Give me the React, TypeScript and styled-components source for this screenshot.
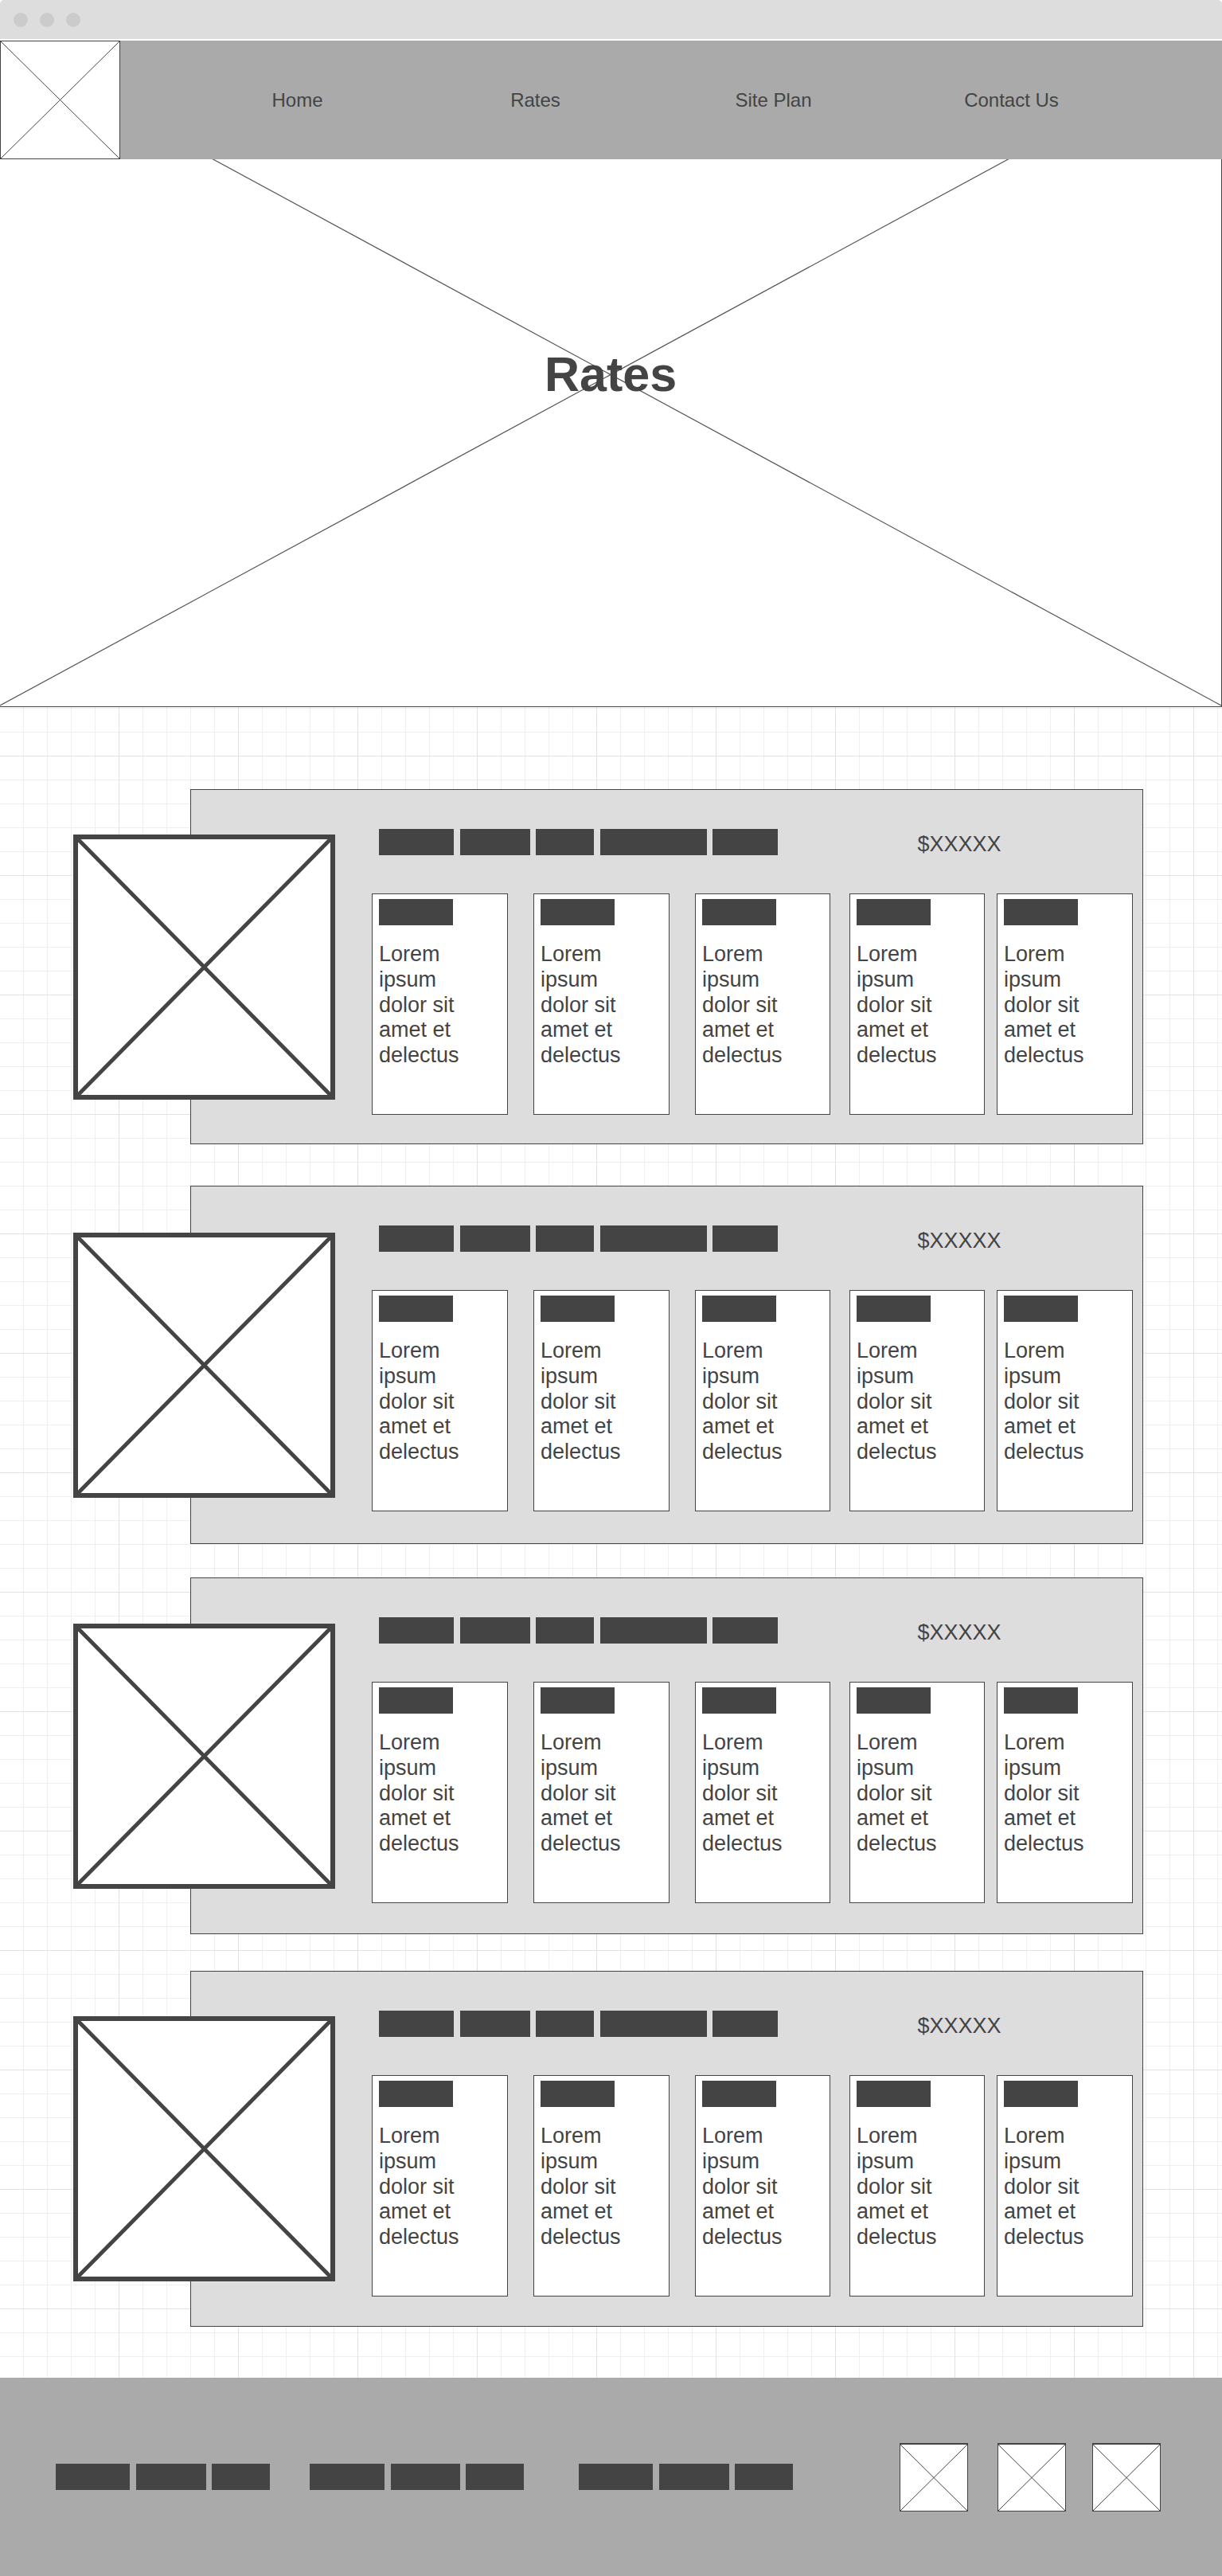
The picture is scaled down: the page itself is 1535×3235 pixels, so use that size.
import React from 'react';
import styled, { createGlobalStyle } from 'styled-components';

const INK = '#444444';

const GlobalStyle = createGlobalStyle`
  html, body {
    margin: 0;
    padding: 0;
    background: #ffffff;
  }
  body {
    font-family: "Liberation Sans", Arial, sans-serif;
    color: ${INK};
  }
  * {
    box-sizing: border-box;
  }
`;

const Page = styled.div`
  width: 1535px;
`;

/* browser chrome */
const ChromeBar = styled.div`
  display: flex;
  align-items: center;
  gap: 15px;
  height: 49px;
  margin-bottom: 2px;
  padding-left: 17px;
  background: #dddddd;
  border-radius: 5px 5px 0 0;
`;

const Dot = styled.span`
  width: 18px;
  height: 18px;
  border-radius: 50%;
  background: #cbcbcb;
`;

/* header */
const Header = styled.header`
  display: flex;
  height: 149px;
  background: #aaaaaa;
`;

const Logo = styled.div`
  flex-shrink: 0;
  width: 151px;
  height: 149px;
  background: #ffffff;
  border: 1px solid ${INK};
`;

const Nav = styled.nav`
  display: grid;
  grid-template-columns: repeat(4, 299px);
  align-items: center;
  margin-left: 73px;
`;

const NavLink = styled.a`
  text-align: center;
  font-size: 24px;
  color: ${INK};
  text-decoration: none;
`;

const CrossSvg = styled.svg`
  display: block;
  width: 100%;
  height: 100%;
`;

const Cross = ({ weight = 1 }: { weight?: number }) => (
  <CrossSvg viewBox="0 0 100 100" preserveAspectRatio="none">
    <line x1="0" y1="0" x2="100" y2="100" stroke={INK} strokeWidth={weight} vectorEffect="non-scaling-stroke" />
    <line x1="100" y1="0" x2="0" y2="100" stroke={INK} strokeWidth={weight} vectorEffect="non-scaling-stroke" />
  </CrossSvg>
);

/* hero */
const Hero = styled.section`
  position: relative;
  height: 688px;
  background: #ffffff;
  border-right: 1px solid ${INK};
  border-bottom: 1px solid ${INK};
  overflow: hidden;
`;

const HeroLines = styled.svg`
  position: absolute;
  inset: 0;
  width: 100%;
  height: 100%;
`;

const HeroTitle = styled.h1`
  position: relative;
  margin: 0;
  padding-top: 240px;
  text-align: center;
  font-size: 61px;
  line-height: 61px;
  font-weight: 700;
  color: ${INK};
`;

/* rates list */
const RatesArea = styled.section`
  display: flow-root;
  padding: 103px 0 64px;
  background-color: #ffffff;
  background-image:
    linear-gradient(to right, #e2e2e2 1px, transparent 1px),
    linear-gradient(to bottom, #e2e2e2 1px, transparent 1px),
    linear-gradient(to right, #efefef 1px, transparent 1px),
    linear-gradient(to bottom, #efefef 1px, transparent 1px);
  background-size: 150px 150px, 150px 150px, 30px 30px, 30px 30px;
  background-position: 149px 0, 0 61px, 29px 0, 0 1px;
`;

const Row = styled.div<{ $top: number }>`
  display: flex;
  align-items: center;
  padding-left: 92px;
  margin-top: ${p => p.$top}px;
`;

const Thumb = styled.div`
  position: relative;
  z-index: 1;
  flex-shrink: 0;
  width: 329px;
  height: 333px;
  background: #ffffff;
  border: 6px solid ${INK};
`;

const Panel = styled.div<{ $height: number }>`
  flex-shrink: 0;
  width: 1197px;
  height: ${p => p.$height}px;
  margin-left: -182px;
  padding: 49px 0 0 227px;
  background: #dddddd;
  border: 1px solid ${INK};
`;

const TopRow = styled.div`
  display: flex;
  align-items: flex-start;
  gap: 7.5px;
  height: 33px;
  padding-left: 9px;
`;

const Block = styled.span<{ $w: number }>`
  display: block;
  flex-shrink: 0;
  width: ${p => p.$w}px;
  height: 33px;
  background: ${INK};
`;

const Price = styled.span`
  margin-left: 168px;
  padding-top: 3px;
  font-size: 27px;
  line-height: 33px;
  color: ${INK};
`;

const Cards = styled.div`
  display: flex;
  margin-top: 48px;
`;

const Card = styled.div<{ $offset: number; $w: number }>`
  flex-shrink: 0;
  width: ${p => p.$w}px;
  height: 278px;
  margin-left: ${p => p.$offset}px;
  padding: 6px 0 0 8px;
  background: #ffffff;
  border: 1px solid ${INK};
`;

const CardText = styled.p`
  margin: 21px 0 0;
  font-size: 27px;
  line-height: 31.75px;
  color: ${INK};
`;

/* footer */
const Footer = styled.footer`
  display: flex;
  align-items: center;
  height: 249px;
  padding-left: 70px;
  background: #aaaaaa;
`;

const FooterGroup = styled.div<{ $offset: number }>`
  display: flex;
  gap: 7.5px;
  margin-left: ${p => p.$offset}px;
`;

const SocialIcon = styled.div<{ $offset: number }>`
  flex-shrink: 0;
  width: 86px;
  height: 86px;
  margin-left: ${p => p.$offset}px;
  background: #ffffff;
  border: 1px solid ${INK};
  border-top-width: 2px;
`;

const navItems = ['Home', 'Rates', 'Site Plan', 'Contact Us'];
const topBlocks = [94, 88, 73, 134, 82];
const cardLayout = [
  { offset: 0, w: 171 },
  { offset: 32, w: 171 },
  { offset: 32, w: 170 },
  { offset: 24, w: 170 },
  { offset: 15, w: 171 },
];
const rows = [
  { top: 0, height: 446 },
  { top: 52, height: 450 },
  { top: 42, height: 448 },
  { top: 46, height: 447 },
];
const footerGroups = [
  { offset: 0, bars: [93, 88, 73] },
  { offset: 50, bars: [94, 87, 73] },
  { offset: 69, bars: [93, 88, 73] },
];
const socialOffsets = [134, 37, 33];

const RateRow = ({ top, height }: { top: number; height: number }) => (
  <Row $top={top}>
    <Thumb>
      <Cross weight={5} />
    </Thumb>
    <Panel $height={height}>
      <TopRow>
        {topBlocks.map((w, i) => (
          <Block key={i} $w={w} />
        ))}
        <Price>$XXXXX</Price>
      </TopRow>
      <Cards>
        {cardLayout.map((c, i) => (
          <Card key={i} $offset={c.offset} $w={c.w}>
            <Block $w={93} />
            <CardText>
              Lorem<br />ipsum<br />dolor sit<br />amet et<br />delectus
            </CardText>
          </Card>
        ))}
      </Cards>
    </Panel>
  </Row>
);

export default function App() {
  return (
    <Page>
      <GlobalStyle />
      <ChromeBar>
        <Dot />
        <Dot />
        <Dot />
      </ChromeBar>

      <Header>
        <Logo>
          <Cross />
        </Logo>
        <Nav>
          {navItems.map(item => (
            <NavLink key={item} href="#">{item}</NavLink>
          ))}
        </Nav>
      </Header>

      <Hero>
        <HeroLines viewBox="0 0 1534 687" preserveAspectRatio="none">
          <line x1="0" y1="-145" x2="1534" y2="686" stroke="#555" strokeWidth="1.2" />
          <line x1="1534" y1="-145" x2="0" y2="686" stroke="#555" strokeWidth="1.2" />
        </HeroLines>
        <HeroTitle>Rates</HeroTitle>
      </Hero>

      <RatesArea>
        {rows.map((r, i) => (
          <RateRow key={i} top={r.top} height={r.height} />
        ))}
      </RatesArea>

      <Footer>
        {footerGroups.map((g, i) => (
          <FooterGroup key={i} $offset={g.offset}>
            {g.bars.map((w, j) => (
              <Block key={j} $w={w} />
            ))}
          </FooterGroup>
        ))}
        {socialOffsets.map((o, i) => (
          <SocialIcon key={i} $offset={o}>
            <Cross />
          </SocialIcon>
        ))}
      </Footer>
    </Page>
  );
}
